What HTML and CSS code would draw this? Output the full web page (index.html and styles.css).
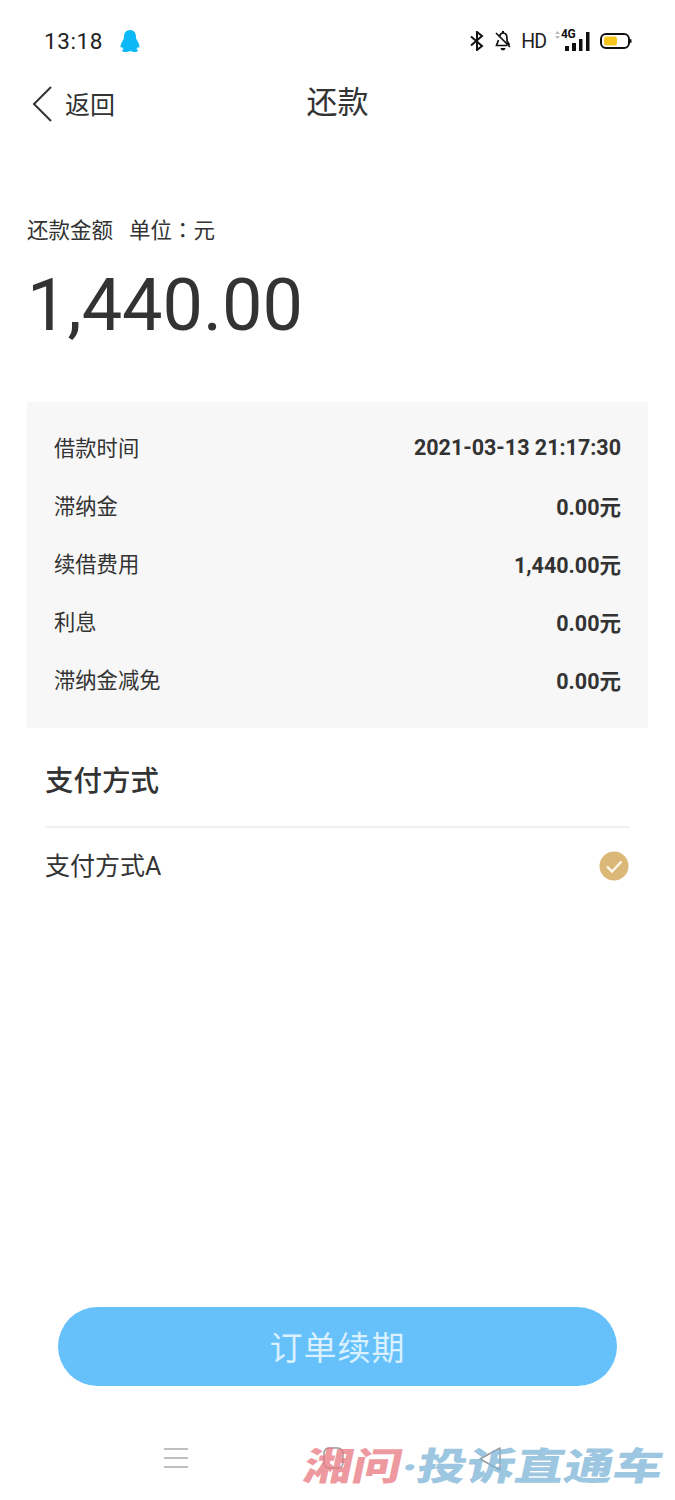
FILE: index.html
```html
<!DOCTYPE html>
<html lang="zh">
<head>
<meta charset="utf-8">
<title>还款</title>
<link rel="stylesheet" href="styles.css">
</head>
<body>
<div class="page">
  <header class="status">
    <div class="status-left">
      <span class="time">13:18</span>
      <svg class="qq" width="20" height="24" viewBox="0 0 20 24"><path fill="#0cb8f5" d="M10 1c4 0 6 3 6 7 0 1 .2 2 1 3.200 1.300 2 2.500 4.300 2.500 6.300 0 1.300-.7 1.500-1.700.4-.3 1-.8 1.700-1.500 2.400 1 .4 1.700.9 1.700 1.400 0 .8-2.300 1.300-4.500 1.300-1.500 0-2.800-.4-3.500-.9-.7.5-2 .9-3.500.9-2.200 0-4.500-.5-4.500-1.300 0-.5.7-1 1.700-1.400-.7-.7-1.200-1.400-1.500-2.400-1 1.100-1.700.9-1.700-.4 0-2 1.200-4.300 2.500-6.300.8-1.200 1-2.200 1-3.200 0-4 2-7 6-7z"/></svg>
    </div>
    <div class="status-right">
      <svg width="16" height="20" viewBox="0 0 16 20"><path fill="none" stroke="#111" stroke-width="2" d="M2 5.500l11 9.500-5 4V1l5 4L2 14.500"/></svg>
      <svg width="18" height="22" viewBox="0 0 18 22"><path fill="none" stroke="#111" stroke-width="1.700" d="M2 3l14 14M5.500 6.500C6 4.500 7 3 9 3c3 0 4 2.500 4 5.500V11l2.500 4M4.500 10L2.500 15.500H13"/><path fill="#111" d="M8 1h2v2H8zM6.500 18h5a2.500 2.500 0 0 1-5 0z"/></svg>
      <span class="hd">HD</span>
      <span class="signal">
        <span class="net">4G</span>
        <svg width="36" height="22" viewBox="0 0 36 22"><path fill="#bbb" d="M0 4l2.500-3L5 4zM0 6l2.500 3L5 6z"/><rect x="10" y="16" width="4" height="5" fill="#111"/><rect x="17" y="13" width="4" height="8" fill="#111"/><rect x="24" y="9" width="3.500" height="12" fill="#111"/><rect x="31" y="2" width="3.500" height="19" fill="#111"/></svg>
      </span>
      <svg class="battery" width="32" height="18" viewBox="0 0 32 18"><rect x="1" y="2" width="28" height="14" rx="5" fill="none" stroke="#111" stroke-width="2"/><rect x="4" y="4.500" width="13" height="9" rx="2.500" fill="#f6c61f"/><rect x="30" y="7" width="1.500" height="4" rx=".7" fill="#111"/></svg>
    </div>
  </header>

  <nav class="nav">
    <div class="back">
      <svg width="22" height="38" viewBox="0 0 22 38"><path fill="none" stroke="#333" stroke-width="2" d="M20 2L3 19l17 17"/></svg>
      <span class="back-text">返回</span>
    </div>
    <h1 class="title">还款</h1>
  </nav>

  <section class="amount">
    <div class="amount-label">还款金额&nbsp;&nbsp;&nbsp;单位<span class="colon" lang="zh-TW">：</span>元</div>
    <div class="amount-value">1,440.00</div>
  </section>

  <section class="details">
    <div class="row"><span class="row-name">借款时间</span><b>2021-03-13 21:17:30</b></div>
    <div class="row"><span class="row-name">滞纳金</span><b>0.00元</b></div>
    <div class="row"><span class="row-name">续借费用</span><b>1,440.00元</b></div>
    <div class="row"><span class="row-name">利息</span><b>0.00元</b></div>
    <div class="row"><span class="row-name">滞纳金减免</span><b>0.00元</b></div>
  </section>

  <section class="pay">
    <h2 class="pay-title">支付方式</h2>
    <div class="pay-row">
      <span class="pay-name">支付方式A</span>
      <svg width="30" height="30" viewBox="0 0 30 30"><circle cx="15" cy="15" r="14.500" fill="#dcb878"/><path fill="none" stroke="#fdf8ec" stroke-width="2.400" d="M8 15.500l5 5 9.500-10"/></svg>
    </div>
  </section>

  <div class="spacer"></div>

  <div class="action"><button class="btn">订单续期</button></div>

  <footer class="softkeys">
    <svg width="24" height="22" viewBox="0 0 24 22"><path stroke="#aaa" stroke-width="1.600" d="M0 2h24M0 11h24M0 20h24"/></svg>
    <svg width="21" height="22" viewBox="0 0 21 22"><rect x="1" y="1" width="19" height="20" rx="5" fill="none" stroke="#999" stroke-width="1.500"/></svg>
    <svg width="22" height="24" viewBox="0 0 22 24"><path fill="none" stroke="#999" stroke-width="1.500" stroke-linejoin="round" d="M21 1v22L1 12z"/></svg>
  </footer>

  <div class="watermark"><span class="wm-red">湘问</span><span class="wm-blue">·投诉直通车</span></div>
</div>
</body>
</html>
```

FILE: styles.css
```css
* { box-sizing: border-box; }
html, body { margin: 0; padding: 0; background: #fff; }
body { font-family: Roboto, "Noto Sans CJK SC", sans-serif; color: #333; }
.page { position: relative; width: 675px; height: 1500px; display: flex; flex-direction: column; overflow: hidden; }

.status { height: 82px; padding: 0 43px 0 44px; display: flex; justify-content: space-between; align-items: center; }
.status-left { display: flex; align-items: center; gap: 17px; }
.time { font-size: 22.500px; letter-spacing: .6px; color: #222; }
.status-right { display: flex; align-items: center; gap: 9px; }
.hd { font-size: 19.500px; color: #222; letter-spacing: -1px; }
.signal { position: relative; display: flex; }
.net { position: absolute; left: 6px; top: -3px; font-size: 12px; font-weight: 700; color: #111; letter-spacing: -.5px; }

.nav { position: relative; height: 44px; display: flex; align-items: center; justify-content: center; }
.back { position: absolute; left: 31px; top: 3px; display: flex; align-items: center; gap: 12px; font-size: 25px; }
.back-text { padding-bottom: 2px; }
.title { margin: 0; padding-bottom: 2px; font-size: 31px; font-weight: 400; line-height: 42px; }

.amount { padding: 87px 27px 0; height: 276px; }
.amount-label { font-size: 21.500px; line-height: 32px; }
.colon { font-family: "Noto Sans CJK TC", sans-serif; }
.amount-value { font-size: 72px; line-height: 84px; margin-top: 17px; }

.details { margin: 0 27px; padding: 16px 27px 20px; background: #f7f7f7; display: flex; flex-direction: column; }
.row { height: 58px; display: flex; justify-content: space-between; align-items: center; font-size: 21.300px; }
.row-name { padding-bottom: 2px; }
.row b { font-weight: 700; font-size: 21.500px; }

.pay { margin: 0 45px; }
.pay-title { margin: 0; height: 100px; border-bottom: 2px solid #f1f1f1; font-size: 28.500px; font-weight: 500; line-height: 108px; }
.pay-row { height: 76px; display: flex; justify-content: space-between; align-items: center; font-size: 25px; padding-right: 1px; }
.pay-name { padding-bottom: 4px; }

.spacer { flex: 1; }
.action { padding: 0 58px; }
.btn { display: block; width: 100%; height: 79px; padding: 0 0 2px; border: 0; border-radius: 40px; background: #66c1fb; color: #d9f0ff; font: 400 33px Roboto, "Noto Sans CJK SC", sans-serif; letter-spacing: 1px; }

.softkeys { height: 114px; padding: 61px 174px 0 164px; display: flex; justify-content: space-between; align-items: flex-start; }

.watermark { position: absolute; left: 304px; top: 1442px; display: flex; font-size: 38px; line-height: 50px; font-weight: 900; white-space: nowrap; transform-origin: left center; transform: skewX(-12deg) scaleX(1.29); }
.wm-red { color: rgba(232, 120, 128, .75); }
.wm-blue { color: rgba(125, 180, 215, .75); }
```
